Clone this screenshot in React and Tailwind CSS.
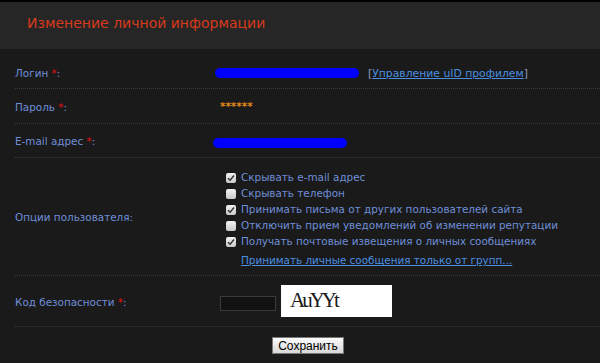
import React from "react";

const font = { fontFamily: '"DejaVu Sans", Verdana, sans-serif' };

const options = [
  { label: "Скрывать e-mail адрес", checked: true },
  { label: "Скрывать телефон", checked: false },
  { label: "Принимать письма от других пользователей сайта", checked: true },
  { label: "Отключить прием уведомлений об изменении репутации", checked: false },
  { label: "Получать почтовые извещения о личных сообщениях", checked: true },
];

function Label({ text, required }) {
  return (
    <div className="w-[203px] shrink-0 pt-[3px] text-[10.4px] text-[#6f8fd8]">
      {text}
      {required && <span className="text-[#e01010]"> *</span>}
      <span>:</span>
    </div>
  );
}

function Row({ className = "", children }) {
  return (
    <div className={`ml-[15px] flex items-center border-b border-dotted border-[#3b3b3b] ${className}`}>
      {children}
    </div>
  );
}

function Box({ checked }) {
  return (
    <span className="flex h-[10px] w-[10px] items-center justify-center rounded-[2px] bg-gradient-to-b from-[#f2f2f2] to-[#c9c9c9]">
      {checked && (
        <svg width="8" height="8" viewBox="0 0 8 8">
          <path d="M1 4.2 L3.1 6.3 L7 1.5" fill="none" stroke="#333" strokeWidth="1.4" />
        </svg>
      )}
    </span>
  );
}

export default function App() {
  return (
    <div className="h-[363px] w-[600px] overflow-hidden bg-[#1a1a1a]" style={font}>
      {/* заголовок */}
      <div className="h-[49px] border-t-2 border-black bg-[#262626] pl-[27px] pt-[11px]">
        <h1 className="text-[14px] text-[#d83a1c]">Изменение личной информации</h1>
      </div>

      <Row className="h-[40px] pt-[8px]">
        <Label text="Логин" required />
        <span className="ml-[-3px] h-[10px] w-[144px] rounded-full bg-[#0000ff]" />
        <span className="ml-[9px] pt-[3px] text-[10.8px] text-[#8a9bb8]">
          [<a className="text-[#4a8fe0] underline">Управление uID профилем</a>]
        </span>
      </Row>

      <Row className="h-[35px]">
        <Label text="Пароль" required />
        <span className="ml-[2px] pt-[1px] text-[10.4px] font-bold text-[#e08a1a]">******</span>
      </Row>

      <Row className="h-[34px]">
        <Label text="E-mail адрес" required />
        <span className="ml-[-5px] mt-[4px] h-[10px] w-[134px] rounded-full bg-[#0000ff]" />
      </Row>

      <Row className="h-[118px]">
        <Label text="Опции пользователя" />
        <div className="pl-[8px] pt-[6px]">
          {options.map((o) => (
            <div key={o.label} className="flex h-[16px] items-center gap-[5px] text-[10.4px] text-[#6f8fd8]">
              <Box checked={o.checked} />
              <span>{o.label}</span>
            </div>
          ))}
          <a className="mt-[3px] ml-[15px] block text-[10.4px] text-[#4a8fe0] underline">
            Принимать личные сообщения только от групп...
          </a>
        </div>
      </Row>

      <Row className="h-[51px]">
        <Label text="Код безопасности" required />
        <span className="ml-[2px] mt-[4px] h-[15px] w-[56px] border border-[#3a3a3a] bg-[#121212]" />
        <span
          className="ml-[5px] flex h-[32px] w-[111px] items-center bg-white pl-[9px] text-[21px] tracking-[-3px] text-[#1a1a1a]"
          style={{ fontFamily: '"Liberation Serif", serif' }}
        >
          AuYYt
        </span>
      </Row>

      <div className="flex justify-center pt-[10px]">
        <button
          className="ml-[16px] h-[17px] w-[72px] border border-[#777] bg-gradient-to-b from-[#fafafa] to-[#d8d8d8] text-[12px] leading-none text-black"
          style={{ fontFamily: '"Liberation Sans", Arial, sans-serif' }}
        >
          Сохранить
        </button>
      </div>
    </div>
  );
}
